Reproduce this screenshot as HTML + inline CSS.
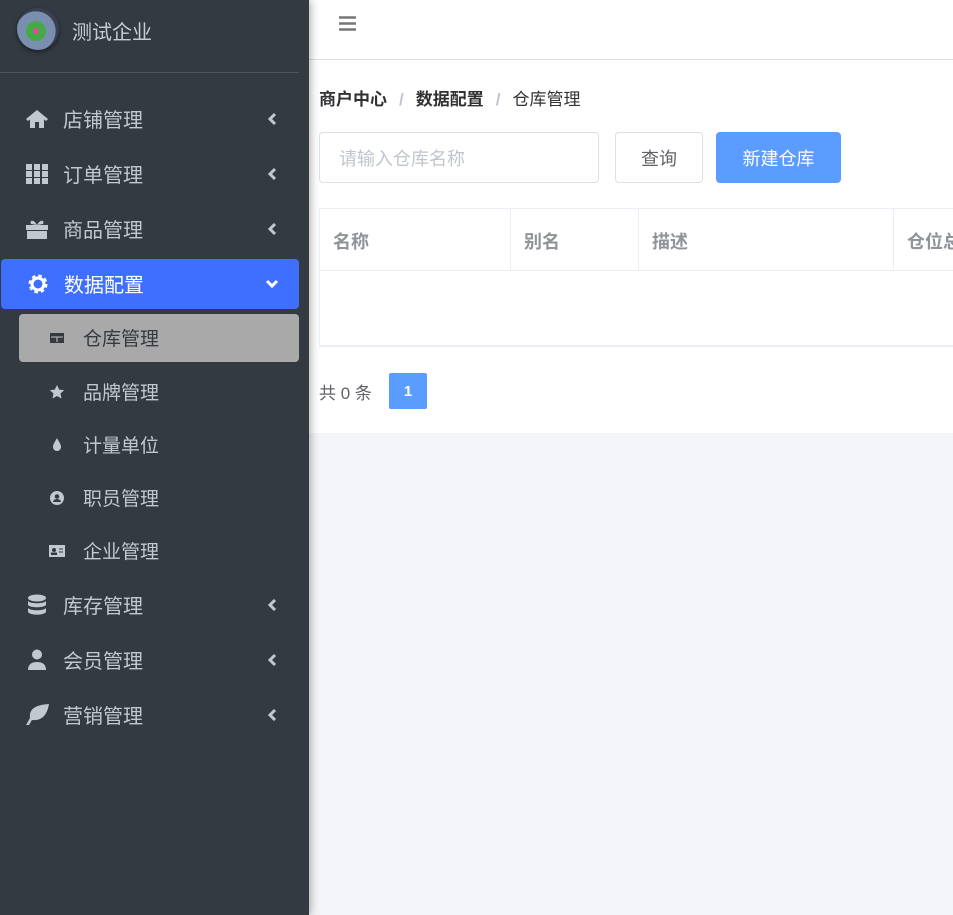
<!DOCTYPE html>
<html><head><meta charset="utf-8"><style>
*{box-sizing:border-box;margin:0;padding:0}
body{width:953px;height:915px;overflow:hidden;background:#f4f5f8;font-family:"Liberation Sans","Noto Sans CJK SC",sans-serif;position:relative}
.side{position:absolute;left:0;top:0;width:309px;height:915px;background:#343a42;box-shadow:2px 0 8px rgba(0,0,0,.3);z-index:2}
.logo{position:absolute;left:17px;top:8px;width:42px;height:42px;border-radius:50%;background:radial-gradient(circle at 45% 55%,#e4a 0 8%,#4a4 9% 30%,#7a8eb0 31% 60%,#394050 61%);box-shadow:0 2px 4px rgba(0,0,0,.5)}
.brand{position:absolute;left:72px;top:16px;font-size:20px;color:#c8ccd2}
.hr{position:absolute;left:0;top:72px;width:299px;height:1px;background:#4e545c}
.it{position:absolute;left:0;width:299px;height:50px;color:#c2c7d0;font-size:20px;line-height:54px}
.it .ic{position:absolute;left:25px;top:14px;width:24px;height:22px}
.it .tx{position:absolute;left:63px}
.it .ar{position:absolute;left:267px;top:18px;width:10px;height:14px}
.act{background:#3f6fff;color:#fff;border-radius:4px;left:1px;width:298px}
.sub{position:absolute;left:19px;width:280px;height:48px;line-height:52px;color:#c2c7d0;font-size:19px}
.sub .ic{position:absolute;left:30px;top:17px;width:16px;height:14px}
.sub .tx{position:absolute;left:64px}
.sel{background:#a9a9a9;color:#343a40;border-radius:4px}
.main{position:absolute;left:309px;top:0;width:644px;height:433px;background:#fff}
.hdr{position:absolute;left:0;top:0;width:644px;height:60px;border-bottom:1px solid #e0e0e0}
.bc{position:absolute;left:10px;top:85px;font-size:17px;color:#303133}
.bc b{font-weight:bold}
.bc s{text-decoration:none;color:#c0c4cc;margin:0 12px;font-weight:bold}
.inp{position:absolute;left:10px;top:132px;width:280px;height:51px;border:1px solid #dcdfe6;border-radius:4px;color:#c0c4cc;font-size:18px;line-height:52px;padding-left:19px}
.b1{position:absolute;left:306px;top:132px;width:88px;height:51px;border:1px solid #dcdfe6;border-radius:4px;font-size:18px;line-height:52px;text-align:center;color:#606266}
.b2{position:absolute;left:407px;top:132px;width:125px;height:51px;background:#5a9cff;border-radius:4px;font-size:18px;line-height:54px;text-align:center;color:#fff}
.tbl{position:absolute;left:10px;top:208px;width:640px;height:139px;border:1px solid #ebeef5;border-bottom:2px solid #ebeef5}
.th{position:absolute;top:0;height:62px;border-bottom:1px solid #ebeef5;line-height:66px;font-weight:bold;color:#909399;font-size:18px;padding-left:13px}
.pg{position:absolute;left:10px;top:379px;font-size:17px;color:#606266}
.pn{position:absolute;left:80px;top:373px;width:38px;height:36px;background:#5a9cff;color:#fff;font-weight:bold;font-size:15px;text-align:center;line-height:38px;border-radius:2px}
</style></head><body>
<div class="side">
<div class="logo"></div><div class="brand">测试企业</div><div class="hr"></div>
<div class="it" style="top:94px"><svg class="ic" viewBox="0 0 24 22"><path d="M12 2L1 11l2 2 2-1.5V20h5v-6h4v6h5v-8.5L21 13l2-2z" fill="#c2c7d0"/></svg><span class="tx">店铺管理</span><svg class="ar" viewBox="0 0 10 14"><path d="M8 2L3 7l5 5" fill="none" stroke="#c2c7d0" stroke-width="3"/></svg></div>
<div class="it" style="top:149px"><svg class="ic" viewBox="0 0 24 22"><g fill="#c2c7d0"><rect x="1" y="1" width="6" height="6"/><rect x="9" y="1" width="6" height="6"/><rect x="17" y="1" width="6" height="6"/><rect x="1" y="8" width="6" height="6"/><rect x="9" y="8" width="6" height="6"/><rect x="17" y="8" width="6" height="6"/><rect x="1" y="15" width="6" height="6"/><rect x="9" y="15" width="6" height="6"/><rect x="17" y="15" width="6" height="6"/></g></svg><span class="tx">订单管理</span><svg class="ar" viewBox="0 0 10 14"><path d="M8 2L3 7l5 5" fill="none" stroke="#c2c7d0" stroke-width="3"/></svg></div>
<div class="it" style="top:204px"><svg class="ic" viewBox="0 0 24 22"><g fill="#c2c7d0"><rect x="1" y="7" width="22" height="5"/><rect x="2" y="13" width="20" height="8"/><path d="M12 7C9 1 4 2 6 6z M12 7c3-6 8-5 6-1z"/></g></svg><span class="tx">商品管理</span><svg class="ar" viewBox="0 0 10 14"><path d="M8 2L3 7l5 5" fill="none" stroke="#c2c7d0" stroke-width="3"/></svg></div>
<div class="it act" style="top:259px"><svg class="ic" viewBox="0 0 24 22"><circle cx="12" cy="11" r="7" fill="none" stroke="#fff" stroke-width="5" stroke-dasharray="3 2.5"/><circle cx="12" cy="11" r="6" fill="none" stroke="#fff" stroke-width="3"/></svg><span class="tx">数据配置</span><svg class="ar" style="width:14px;left:264px" viewBox="0 0 14 14"><path d="M2 4l5 5 5-5" fill="none" stroke="#fff" stroke-width="3"/></svg></div>
<div class="sub sel" style="top:314px"><svg class="ic" viewBox="0 0 16 14"><rect x="1" y="2" width="14" height="10" fill="#343a40"/><path d="M2 6h12M8 6v5" stroke="#a9a9a9" stroke-width="1.3"/></svg><span class="tx">仓库管理</span></div>
<div class="sub" style="top:368px"><svg class="ic" viewBox="0 0 16 14"><path d="M8 0l2.2 4.6 5 .5-3.7 3.4 1 5L8 11l-4.5 2.5 1-5L.8 5.1l5-.5z" fill="#c2c7d0"/></svg><span class="tx">品牌管理</span></div>
<div class="sub" style="top:421px"><svg class="ic" viewBox="0 0 16 14"><path d="M8 0C6 4 4 6 4 9a4 4 0 008 0c0-3-2-5-4-9z" fill="#c2c7d0"/></svg><span class="tx">计量单位</span></div>
<div class="sub" style="top:474px"><svg class="ic" viewBox="0 0 16 14"><circle cx="8" cy="7" r="7" fill="#c2c7d0"/><circle cx="8" cy="5.5" r="2.3" fill="#343a42"/><path d="M4 11a4 3 0 018 0z" fill="#343a42"/></svg><span class="tx">职员管理</span></div>
<div class="sub" style="top:527px"><svg class="ic" viewBox="0 0 16 14"><rect x="0" y="1" width="16" height="12" fill="#c2c7d0"/><circle cx="5" cy="6" r="2" fill="#343a42"/><rect x="2" y="8.5" width="6" height="2.5" fill="#343a42"/><path d="M10 5h4M10 8h4" stroke="#343a42"/></svg><span class="tx">企业管理</span></div>
<div class="it" style="top:580px"><svg class="ic" viewBox="0 0 24 22"><g fill="#c2c7d0"><ellipse cx="12" cy="4" rx="9" ry="3.5"/><path d="M3 7c2 3 16 3 18 0v4c-2 3-16 3-18 0z M3 14c2 3 16 3 18 0v4c-2 3.5-16 3.5-18 0z"/></g></svg><span class="tx">库存管理</span><svg class="ar" viewBox="0 0 10 14"><path d="M8 2L3 7l5 5" fill="none" stroke="#c2c7d0" stroke-width="3"/></svg></div>
<div class="it" style="top:635px"><svg class="ic" viewBox="0 0 24 22"><g fill="#c2c7d0"><circle cx="12" cy="5.5" r="5"/><path d="M3 21c0-6 4-8 9-8s9 2 9 8z"/></g></svg><span class="tx">会员管理</span><svg class="ar" viewBox="0 0 10 14"><path d="M8 2L3 7l5 5" fill="none" stroke="#c2c7d0" stroke-width="3"/></svg></div>
<div class="it" style="top:690px"><svg class="ic" viewBox="0 0 24 22"><path d="M24 0C10 1 4 5 5 14L1 21h3l3-5c9 1 15-4 17-16z" fill="#c2c7d0"/></svg><span class="tx">营销管理</span><svg class="ar" viewBox="0 0 10 14"><path d="M8 2L3 7l5 5" fill="none" stroke="#c2c7d0" stroke-width="3"/></svg></div>
</div>
<div class="main">
<div class="hdr"><svg style="position:absolute;left:30px;top:16px" width="17" height="15" viewBox="0 0 17 15"><path d="M0 1.5h17M0 7.5h17M0 13.5h17" stroke="#777" stroke-width="2.5"/></svg></div>
<div class="bc"><b>商户中心</b><s>/</s><b>数据配置</b><s>/</s>仓库管理</div>
<div class="inp">请输入仓库名称</div><div class="b1">查询</div><div class="b2">新建仓库</div>
<div class="tbl">
<div class="th" style="left:0;width:191px;border-right:1px solid #ebeef5">名称</div>
<div class="th" style="left:191px;width:128px;border-right:1px solid #ebeef5">别名</div>
<div class="th" style="left:319px;width:255px;border-right:1px solid #ebeef5">描述</div>
<div class="th" style="left:574px;width:70px">仓位总</div>
</div>
<div class="pg">共 0 条</div><div class="pn">1</div>
</div>
</body></html>
